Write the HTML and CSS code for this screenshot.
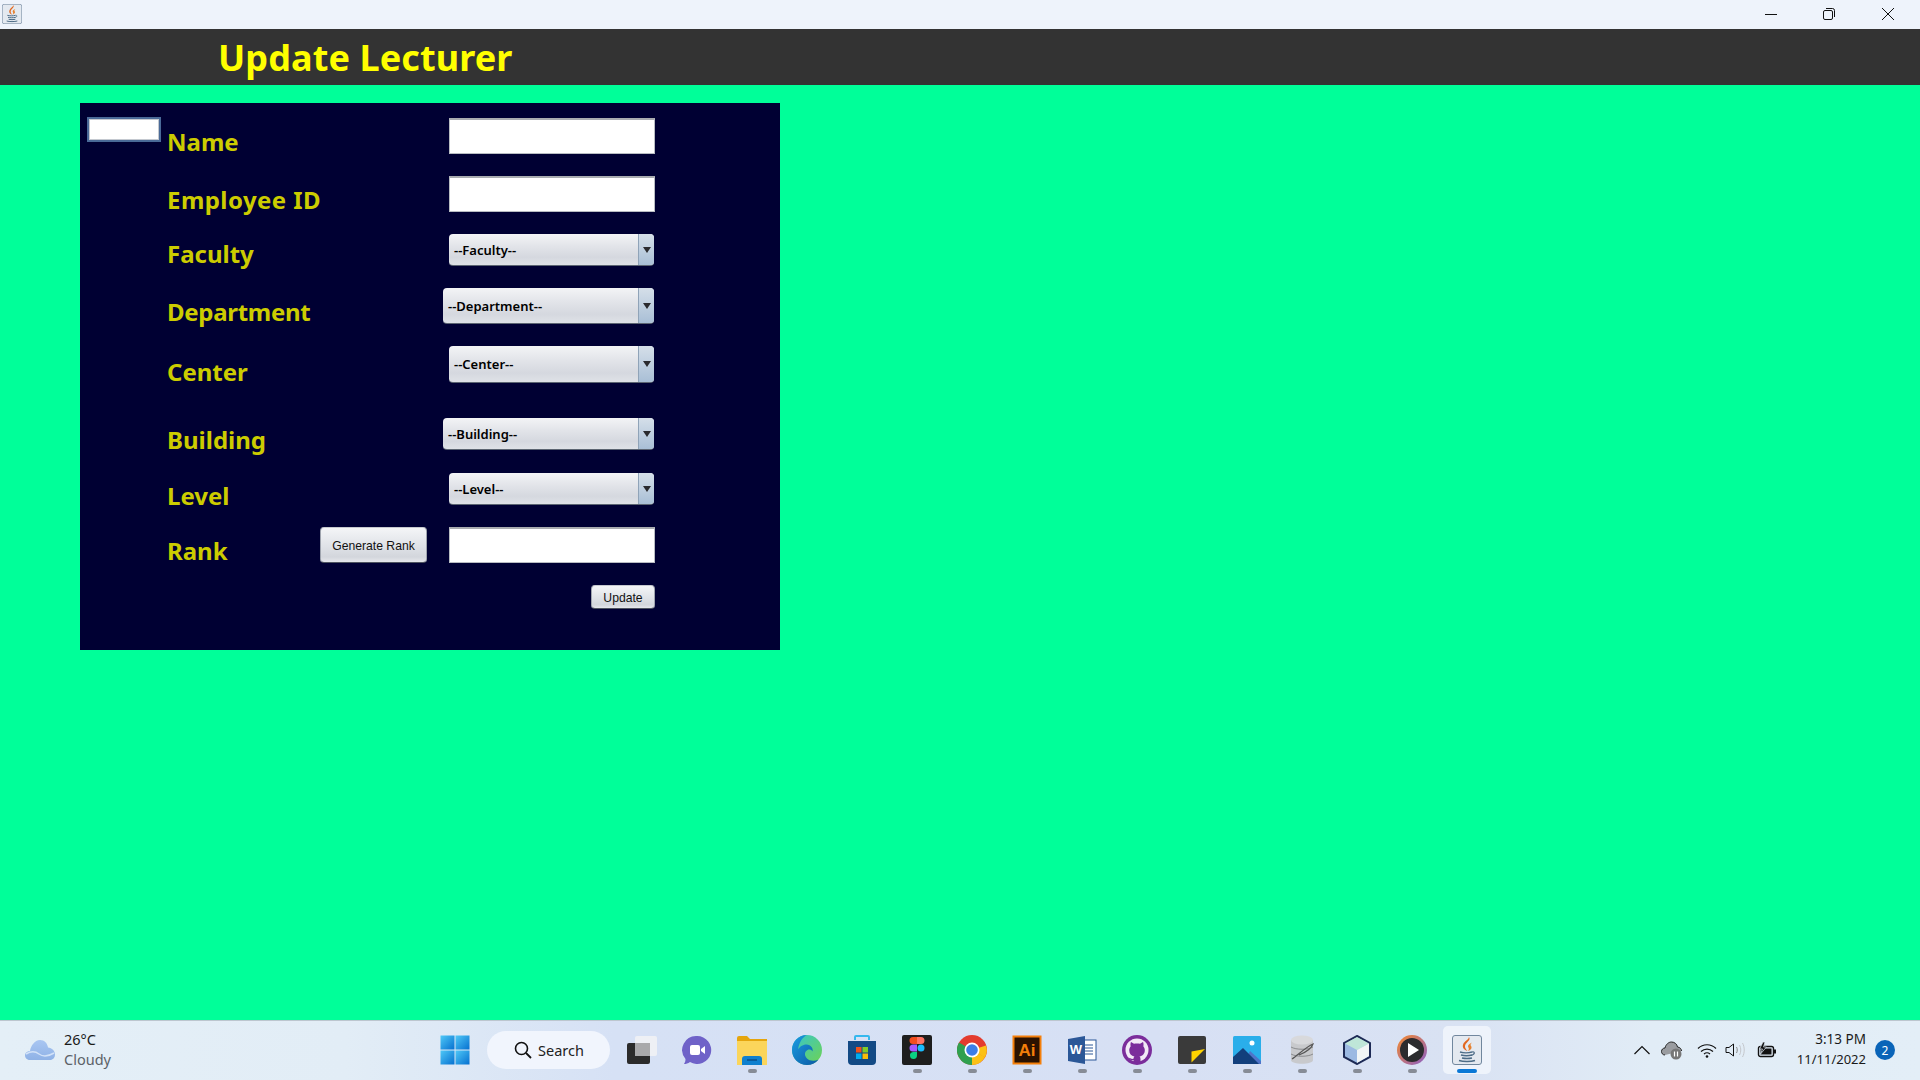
FILE: index.html
```html
<!DOCTYPE html>
<html lang="en">
<head>
<meta charset="utf-8">
<title>Update Lecturer</title>
<link rel="stylesheet" href="styles.css">
</head>
<body>
<svg class="defs" width="0" height="0" aria-hidden="true">
  <symbol id="java" viewBox="0 0 30 30">
    <rect x="0.5" y="0.5" width="29" height="29" rx="2.5" fill="#e4e9f0" stroke="#71879e"/>
    <path d="M17 2c2.500 3.500-4 5.500-4 9.500 0 1.800 1.200 3 2.500 4.500-4-1.500-5.500-3.800-4.300-6.800C12.400 6 16.500 5 17 2z" fill="#e2671f"/>
    <path d="M20 7.500c-3.500 1.500-4.800 3.200-3.600 5 .7 1.100.6 2.300-.4 3.500 3.500-1.200 4.200-3.400 3-5-.8-1.100-.4-2.200 1-3.500z" fill="#e6812f"/>
    <path d="M8 17c3 1 9 1 12 0M9 20c3 .8 8 .8 11 0M10 23c3 .6 7 .6 10 0" fill="none" stroke="#4d6c87" stroke-width="1.500"/>
    <path d="M20 17c3-.8 3.500 2.500-1 3.500" fill="none" stroke="#4d6c87" stroke-width="1.200"/>
    <path d="M7 25.500c4 1.200 12 1.200 16 0" fill="none" stroke="#4d6c87" stroke-width="1.500"/>
  </symbol>
</svg>

<header class="titlebar">
  <svg class="titlebar-icon"><use href="#java"/></svg>
  <div class="window-controls">
    <span class="win-btn"><svg width="14" height="14" viewBox="0 0 14 14"><path d="M1 7.500h12" stroke="#111" fill="none"/></svg></span>
    <span class="win-btn"><svg width="14" height="14" viewBox="0 0 14 14"><rect x="1.500" y="3.500" width="9" height="9" rx="1.500" fill="none" stroke="#111"/><path d="M4 1.500h6.500a2 2 0 0 1 2 2V10" fill="none" stroke="#111"/></svg></span>
    <span class="win-btn"><svg width="14" height="14" viewBox="0 0 14 14"><path d="M1 1l12 12M13 1L1 13" stroke="#111" fill="none"/></svg></span>
  </div>
</header>

<div class="app-header"><h1 class="app-title">Update Lecturer</h1></div>

<main class="canvas">
  <form class="panel">
    <div class="row row-first row-h36">
      <input class="mini-field" type="text">
      <label class="label label-6">Name</label>
      <input class="field" type="text">
    </div>
    <div class="row row-h36">
      <label class="label label-6 label-loose">Employee ID</label>
      <input class="field" type="text">
    </div>
    <div class="row row-h32">
      <label class="label label-4">Faculty</label>
      <div class="combo combo-h32"><span class="combo-text">--Faculty--</span><span class="combo-arrow"></span></div>
    </div>
    <div class="row row-h36">
      <label class="label label-6 label-tight">Department</label>
      <div class="combo combo-wide combo-h36"><span class="combo-text">--Department--</span><span class="combo-arrow"></span></div>
    </div>
    <div class="row row-h37">
      <label class="label label-8">Center</label>
      <div class="combo combo-h37"><span class="combo-text">--Center--</span><span class="combo-arrow"></span></div>
    </div>
    <div class="row row-h32 row-gap-large">
      <label class="label label-6">Building</label>
      <div class="combo combo-wide combo-h32"><span class="combo-text">--Building--</span><span class="combo-arrow"></span></div>
    </div>
    <div class="row row-h32 row-gap-23">
      <label class="label label-7">Level</label>
      <div class="combo combo-h32"><span class="combo-text">--Level--</span><span class="combo-arrow"></span></div>
    </div>
    <div class="row row-h36">
      <label class="label label-6">Rank</label>
      <button class="btn btn-generate" type="button">Generate Rank</button>
      <input class="field field-narrowcol" type="text">
    </div>
    <div class="row row-h24">
      <button class="btn btn-update" type="button">Update</button>
    </div>
  </form>
</main>

<footer class="taskbar">
  <div class="weather">
    <svg class="weather-icon" width="32" height="22" viewBox="0 0 32 22">
      <defs><linearGradient id="cl" x1="0" y1="0" x2="0" y2="1"><stop offset="0" stop-color="#a9c6f2"/><stop offset="1" stop-color="#8fb2e6"/></linearGradient></defs>
      <path d="M6 21C2.500 21 1 18.500 1 16.500 1 13.500 3.500 12 6 12c.8-5 4.500-11 10-11 4.500 0 7.500 3.500 8 7.500 4 .3 7 3.500 7 7 0 3-2 5.500-5 5.500z" fill="url(#cl)"/>
      <path d="M2 15c5-3 9-3 13 0s10 2 15-1" fill="none" stroke="#d2e2f8" stroke-width="1.500"/>
    </svg>
    <div class="weather-text">
      <span class="weather-temp">26°C</span>
      <span class="weather-desc">Cloudy</span>
    </div>
  </div>

  <div class="apps">
    <div class="app app-start">
      <svg width="30" height="30" viewBox="0 0 30 30">
        <defs><linearGradient id="win" x1="0" y1="0" x2="1" y2="1"><stop offset="0" stop-color="#4fc8f7"/><stop offset="1" stop-color="#0670d0"/></linearGradient></defs>
        <rect x="0.500" y="0.500" width="14" height="14" fill="url(#win)"/><rect x="15.500" y="0.500" width="14" height="14" fill="url(#win)"/>
        <rect x="0.500" y="15.500" width="14" height="14" fill="url(#win)"/><rect x="15.500" y="15.500" width="14" height="14" fill="url(#win)"/>
      </svg>
    </div>
    <div class="search">
      <svg width="18" height="18" viewBox="0 0 18 18"><circle cx="7.500" cy="7.500" r="6" fill="none" stroke="#111" stroke-width="1.600"/><path d="M12 12l5 5" stroke="#111" stroke-width="1.800" fill="none"/></svg>
      <span>Search</span>
    </div>
    <div class="app">
      <svg width="31" height="30" viewBox="1 0 31 30">
        <rect x="1" y="8" width="23" height="21" rx="2" fill="#2b2b2b"/>
        <rect x="9" y="1" width="22" height="20" rx="2" fill="#f2f2f4" fill-opacity=".85"/>
        <rect x="9" y="8" width="15" height="13" fill="#a9a9ab"/>
      </svg>
    </div>
    <div class="app">
      <svg width="30" height="30" viewBox="0 0 30 30">
        <path d="M15 1a14 14 0 1 1-7 26c-2 1.500-4 2-6 2 1-1.500 1.500-3 1.500-5A14 14 0 0 1 15 1z" fill="#6f62c8"/>
        <rect x="8" y="10" width="10" height="10" rx="2" fill="#fff"/><path d="M19 14l4-3v8l-4-3z" fill="#fff"/>
      </svg>
    </div>
    <div class="app app-open">
      <svg width="32" height="30" viewBox="0 0 32 30">
        <path d="M1 3a2 2 0 0 1 2-2h8l3 3h17v26H1z" fill="#e5a50d"/>
        <rect x="1" y="6" width="30" height="24" fill="#fbd55b"/>
        <path d="M6 30v-6a3 3 0 0 1 3-3h14a3 3 0 0 1 3 3v6z" fill="#0f80cf"/><path d="M11 25h10" stroke="#0a4f8a" stroke-width="1.500"/>
      </svg>
    </div>
    <div class="app">
      <svg width="30" height="30" viewBox="0 0 30 30">
        <defs>
          <linearGradient id="edge1" x1="0" y1="0" x2="1" y2="1"><stop offset="0" stop-color="#37c6d0"/><stop offset="1" stop-color="#6fd34f"/></linearGradient>
          <linearGradient id="edge2" x1="0" y1="0" x2="1" y2="1"><stop offset="0" stop-color="#1b9de2"/><stop offset="1" stop-color="#0c59a4"/></linearGradient>
        </defs>
        <circle cx="15" cy="15" r="15" fill="url(#edge1)"/>
        <path d="M15 0C6 0 0 7 0 15c0 8 6 15 15 15 5 0 9-2 11.500-5.500-4 2-9 1.500-11.500-1-3-3-2.500-7 .5-8.500 1.500-.8 4-.5 5 1.500 1-3-1.500-7-6-7-4 0-7 2.500-8.500 5C7.500 6 11 2 15 0z" fill="url(#edge2)"/>
      </svg>
    </div>
    <div class="app">
      <svg width="30" height="30" viewBox="0 0 30 30">
        <path d="M8 5V2a1 1 0 0 1 1-1h12a1 1 0 0 1 1 1v3" fill="none" stroke="#35b8ee" stroke-width="2"/>
        <path d="M1 6h28v20a4 4 0 0 1-4 4H5a4 4 0 0 1-4-4z" fill="#134a85"/>
        <rect x="9" y="12" width="5.500" height="5.500" fill="#f1511b"/><rect x="15.500" y="12" width="5.500" height="5.500" fill="#80cc28"/>
        <rect x="9" y="18.500" width="5.500" height="5.500" fill="#00adef"/><rect x="15.500" y="18.500" width="5.500" height="5.500" fill="#fbbc09"/>
      </svg>
    </div>
    <div class="app app-open">
      <svg width="30" height="30" viewBox="0 0 30 30">
        <rect width="30" height="30" rx="2" fill="#1e1e1e"/>
        <path d="M11 2h4v7h-4a3.500 3.500 0 0 1 0-7z" fill="#f24e1e"/><path d="M15 2h4a3.500 3.500 0 0 1 0 7h-4z" fill="#ff7262"/>
        <path d="M11 9.500h4v7h-4a3.500 3.500 0 0 1 0-7z" fill="#a259ff"/><circle cx="19" cy="13" r="3.500" fill="#1abcfe"/>
        <path d="M11 17h4v3.500a3.500 3.500 0 1 1-4-3.500z" fill="#0acf83"/>
      </svg>
    </div>
    <div class="app app-open">
      <svg width="30" height="30" viewBox="0 0 30 30">
        <circle cx="15" cy="15" r="15" fill="#e33b2e"/>
        <path d="M15 15L28 22a15 15 0 0 1-13 8z" fill="#fbc116"/>
        <path d="M15 15L15 30A15 15 0 0 1 2 7.500z" fill="#2fa04f"/>
        <path d="M15 15L29 10.500A15 15 0 0 1 28 22.500z" fill="#fbc116"/>
        <circle cx="15" cy="15" r="7.500" fill="#fff"/><circle cx="15" cy="15" r="5.800" fill="#3b7de8"/>
      </svg>
    </div>
    <div class="app app-open">
      <svg width="30" height="30" viewBox="0 0 30 30">
        <rect x="0.500" y="0.500" width="29" height="29" fill="#f47f0a"/>
        <rect x="2.500" y="2.500" width="25" height="25" fill="#2b1200"/>
        <text class="ai-text" x="15" y="21">Ai</text>
      </svg>
    </div>
    <div class="app app-open">
      <svg width="30" height="30" viewBox="0 0 30 30">
        <rect x="11" y="5" width="18" height="20" fill="#fff" stroke="#2b5797"/>
        <path d="M17 10h9M17 13h9M17 16h9M17 19h9" stroke="#2b5797"/>
        <path d="M1 4l17-3v28L1 26z" fill="#2b5797"/>
        <text class="word-text" x="9" y="19">W</text>
      </svg>
    </div>
    <div class="app app-open">
      <svg width="30" height="30" viewBox="0 0 30 30">
        <circle cx="15" cy="15" r="15" fill="#7b2d9b"/><circle cx="15" cy="15" r="11.500" fill="#f2eaf6"/>
        <path d="M9 7l3 1.800c2-.5 4-.5 6 0L21 7c.6 1.500.7 3 .3 4.300 1 1.200 1.500 2.500 1.500 4 0 3.500-2.200 5.700-5.300 6.200.7.600 1 1.500 1 2.500v3.500h-7v-2.500c-2.500.5-4-.3-5-2.500 1.200.5 3 1.800 5 1.300 0-1 .3-1.800.9-2.300-3.100-.5-5.200-2.700-5.200-6.200 0-1.500.5-2.800 1.500-4C8.300 10 8.400 8.500 9 7z" fill="#7b2d9b"/>
      </svg>
    </div>
    <div class="app app-open">
      <svg width="28" height="28" viewBox="0 0 28 28">
        <rect width="28" height="28" rx="2" fill="#3a3a3a"/>
        <path d="M13.500 15.500L27 13 13.500 26.500z" fill="#ffd400"/>
      </svg>
    </div>
    <div class="app app-open">
      <svg width="28" height="28" viewBox="0 0 28 28">
        <rect width="28" height="28" rx="1.500" fill="#2aaeea"/>
        <circle cx="19" cy="7" r="2.500" fill="#fff"/>
        <path d="M17 15l11 10v3H10z" fill="#4f74c9"/>
        <path d="M0 21L10 12l16 16H0z" fill="#123f7c"/>
      </svg>
    </div>
    <div class="app app-open">
      <svg width="24" height="30" viewBox="0 0 24 30">
        <path d="M1 5v20c0 5 22 5 22 0V5z" fill="#c8c9cc"/>
        <ellipse cx="12" cy="5" rx="11" ry="4.500" fill="#d8d9dc"/>
        <path d="M1 12c5 3 17 3 22 0M1 19c5 3 17 3 22 0" fill="none" stroke="#8a8b8e"/>
        <path d="M2 24C8 20 16 12 23 9c-2 6-9 9-14 11" fill="none" stroke="#555" stroke-width="1.200"/>
      </svg>
    </div>
    <div class="app app-open">
      <svg width="30" height="30" viewBox="0 0 30 30">
        <path d="M15 1l13 7v14l-13 7L2 22V8z" fill="#9cb9e2" stroke="#1d2a55" stroke-width="2"/>
        <path d="M15 2l12 6.500-12 6.500L3 8.500z" fill="#bfe6d8"/>
        <path d="M15 15l12-6.500V21l-12 7z" fill="#f2f5f6"/>
      </svg>
    </div>
    <div class="app app-open">
      <svg width="30" height="30" viewBox="0 0 30 30">
        <defs><linearGradient id="pl" x1="0" y1="0" x2="1" y2="1"><stop offset="0" stop-color="#f58a2c"/><stop offset="1" stop-color="#8a5ec8"/></linearGradient></defs>
        <circle cx="15" cy="15" r="15" fill="url(#pl)"/><circle cx="15" cy="15" r="12" fill="#2c2c2e"/>
        <path d="M11 8l11 7-11 7z" fill="#fff"/>
      </svg>
    </div>
    <div class="app app-active">
      <svg width="30" height="30"><use href="#java"/></svg>
    </div>
  </div>

  <div class="tray">
    <svg class="tray-chevron" width="18" height="10" viewBox="0 0 18 10"><path d="M1.500 9L9 1.500 16.500 9" fill="none" stroke="#111" stroke-width="1.200"/></svg>
    <svg class="tray-cloud" width="22" height="20" viewBox="0 0 22 20">
      <path d="M4 15C1.500 15 .5 13 .5 11.500.5 9.500 2 8 4 8c.8-3.500 3.500-6 6.500-6S16 4 16.500 7c2.500.3 4 2 4 4" fill="#9a9ca0" stroke="#222"/>
      <circle cx="15" cy="14" r="5.500" fill="#777"/><path d="M13.500 11.500v5M16.500 11.500v5" stroke="#fff" stroke-width="1.200"/>
    </svg>
    <svg class="tray-wifi" width="20" height="15" viewBox="0 0 20 15">
      <path d="M1 5.500c5-5 13-5 18 0M4 8.500c3.500-3.200 8.500-3.200 12 0M7 11c1.800-1.500 4.200-1.500 6 0" fill="none" stroke="#111" stroke-width="1.200"/><circle cx="10" cy="13.500" r="1.300" fill="#111"/>
    </svg>
    <svg class="tray-volume" width="20" height="16" viewBox="0 0 20 16">
      <path d="M1 5.500h3L8.500 2v12L4 10.500H1z" fill="none" stroke="#111"/><path d="M11.500 5c1 2 1 4 0 6" fill="none" stroke="#888"/><path d="M14.500 3c1.700 3 1.700 7 0 10M17.500 1c2.300 4 2.300 10 0 14" fill="none" stroke="#c4c7cc"/>
    </svg>
    <svg class="tray-battery" width="20" height="16" viewBox="0 0 20 16">
      <rect x="1.500" y="4.500" width="15" height="10" rx="2" fill="none" stroke="#111" stroke-width="1.400"/>
      <rect x="3.500" y="6.500" width="11" height="6" fill="#111"/><rect x="17" y="7.500" width="2" height="4" fill="#111"/>
      <path d="M6 0L2.500 7h3L3.500 12l6-7H6.500L8 0z" fill="#111" stroke="#e3edf6" stroke-width=".7"/>
    </svg>
    <div class="clock"><span class="clock-time">3:13 PM</span><span class="clock-date">11/11/2022</span></div>
    <span class="badge">2</span>
  </div>
</footer>
</body>
</html>
```

FILE: styles.css
```css
* { box-sizing: border-box; }

html, body { margin: 0; height: 100%; }

body {
  width: 1920px;
  height: 1080px;
  display: flex;
  flex-direction: column;
  overflow: hidden;
  font-family: "Noto Sans", "Open Sans", sans-serif;
}

.defs { display: block; height: 0; }

/* window chrome */
.titlebar {
  flex: 0 0 29px;
  display: flex;
  align-items: center;
  justify-content: space-between;
  padding: 0 3px 2px 2px;
  background: #eef3fb;
}
.titlebar-icon { width: 20px; height: 20px; }
.window-controls { display: flex; }
.win-btn {
  width: 58.500px;
  display: flex;
  justify-content: center;
}

.app-header {
  flex: 0 0 56px;
  display: flex;
  align-items: center;
  padding: 1px 0 0 218px;
  background: #333333;
}
.app-title {
  margin: 0;
  color: #ffff00;
  font-family: "Noto Sans", sans-serif;
  font-size: 36px;
  font-weight: 700;
  letter-spacing: 0.1px;
  line-height: 44px;
  white-space: nowrap;
}

.canvas {
  flex: 1;
  background: #00ff99;
  padding: 18px 0 0 80px;
}

/* form panel */
.panel {
  width: 700px;
  height: 547px;
  padding-top: 15px;
  background: #000033;
}
.row {
  display: grid;
  grid-template-columns: 87px 153px 129px 206px;
  margin-top: 22px;
  align-items: start;
}
.row-h24 { grid-template-rows: 24px; }
.row-h32 { grid-template-rows: 32px; }
.row-h36 { grid-template-rows: 36px; }
.row-h37 { grid-template-rows: 37px; }
.row-first { margin-top: 0; }
.row-gap-large { margin-top: 35px; }
.row-gap-23 { margin-top: 23px; }

.label {
  grid-column: 2;
  align-self: center;
  color: #cccc00;
  font-size: 24px;
  font-weight: 700;
  line-height: 30px;
  white-space: nowrap;
}
.label-4 { margin-top: 8px; }
.label-6 { margin-top: 12px; }
.label-7 { margin-top: 14px; }
.label-8 { margin-top: 14px; }
.label-loose { letter-spacing: 0.45px; }
.label-tight { letter-spacing: -0.3px; }

.field {
  grid-column: 3 / 5;
  justify-self: end;
  width: 206px;
  height: 36px;
  margin: 0;
  padding: 0;
  background: #ffffff;
  border: 1px solid #b8bcc2;
  border-top: 2px solid #a9acb0;
  border-radius: 0;
}
.field-narrowcol { grid-column: 4; }

.mini-field {
  grid-column: 1;
  grid-row: 1;
  justify-self: end;
  width: 74px;
  height: 25px;
  margin: -1px 6px 0 0;
  padding: 0;
  background: #ffffff;
  border: 2px solid #4a6a98;
  box-shadow: inset 0 0 0 1px #c4c9d0;
}

.combo {
  grid-column: 3 / 5;
  justify-self: end;
  width: 205px;
  margin-right: 1px;
  display: flex;
  align-items: center;
  overflow: hidden;
  background: linear-gradient(#f3f4f6 0%, #e2e4e9 40%, #d5d8df 75%, #dfe2e7 100%);
  border-bottom: 1px solid #5c6572;
  border-radius: 4px;
}
.combo-wide { width: 211px; }
.combo-h32 { height: 32px; }
.combo-h36 { height: 36px; }
.combo-h37 { height: 37px; }
.combo-text {
  flex: 1;
  padding-left: 5px;
  color: #000000;
  font-family: "Noto Sans", sans-serif;
  font-size: 13px;
  font-weight: 600;
  white-space: nowrap;
}
.combo-arrow {
  flex: 0 0 16px;
  align-self: stretch;
  position: relative;
  border-left: 1px solid #8fa3b8;
  background: linear-gradient(#d5dfe9, #a9bfd6);
}
.combo-arrow::after {
  content: "";
  position: absolute;
  left: 4px;
  top: calc(50% - 3px);
  border-left: 4px solid transparent;
  border-right: 4px solid transparent;
  border-top: 6px solid #2a2a2e;
}

.btn {
  margin: 0;
  padding: 1px 0 0;
  color: #111111;
  font-family: "Liberation Sans", Arial, sans-serif;
  font-size: 12.200px;
  background: linear-gradient(#f4f5f7, #dfe2e7 55%, #d3d6dc 85%, #e6e8ec);
  border: 1px solid #3f4652;
  border-color: #c6c9cf #9ea3ad #4e5460 #9ea3ad;
  border-radius: 4px;
}
.btn-generate {
  grid-column: 3;
  grid-row: 1;
  width: 107px;
  height: 36px;
}
.btn-update {
  grid-column: 4;
  justify-self: end;
  width: 64px;
  height: 24px;
}

/* taskbar */
.taskbar {
  flex: 0 0 60px;
  display: flex;
  align-items: stretch;
  padding-bottom: 1px;
  border-top: 1px solid #bcc6cf;
  background: linear-gradient(90deg, #e4eff7 0%, #e2edf6 18%, #d6e1f5 32%, #d7e0f4 60%, #d9e2f3 76%, #e1ecf6 86%, #e3eef7 100%);
}
.weather {
  flex: 0 0 427px;
  display: flex;
  align-items: center;
  padding-left: 24px;
  gap: 8px;
}
.weather-icon { margin-top: -1px; }
.weather-text {
  display: flex;
  flex-direction: column;
  margin-top: -2px;
  font-size: 14.500px;
  line-height: 20px;
}
.weather-temp { color: #1a1a1a; }
.weather-desc { color: #5c6268; }

.apps {
  display: flex;
  align-items: center;
  height: 100%;
}
.app {
  position: relative;
  flex: 0 0 55px;
  height: 48px;
  display: flex;
  align-items: center;
  justify-content: center;
}
.app-start { margin-right: 5px; }
.app-open::after,
.app-active::after {
  content: "";
  position: absolute;
  left: 50%;
  bottom: 1px;
  width: 9px;
  height: 4px;
  margin-left: -4.500px;
  border-radius: 2px;
  background: #878c96;
}
.app-active {
  flex: 0 0 48px;
  margin-left: 3.500px;
  border-radius: 5px;
  background: #eef3fb;
}
.app-active::after {
  width: 20px;
  margin-left: -10px;
  background: #0b78d6;
}
.search {
  flex: 0 0 123px;
  height: 38px;
  margin-right: 4.500px;
  display: flex;
  align-items: center;
  padding-left: 27px;
  gap: 6px;
  border-radius: 19px;
  background: #f1f5fd;
  color: #222222;
  font-size: 14.500px;
}
.ai-text {
  fill: #f47f0a;
  font-family: "Liberation Sans", sans-serif;
  font-size: 17px;
  font-weight: 700;
  text-anchor: middle;
}
.word-text {
  fill: #ffffff;
  font-family: "Liberation Sans", sans-serif;
  font-size: 13px;
  font-weight: 700;
  text-anchor: middle;
}

.tray {
  flex: 1;
  display: flex;
  align-items: center;
  padding-left: 142px;
}
.tray-chevron { margin-right: 10px; }
.tray-cloud { margin-right: 14px; }
.tray-wifi { margin-right: 8px; }
.tray-volume { margin-right: 12px; }
.clock {
  flex: 0 0 89px;
  display: flex;
  flex-direction: column;
  align-items: flex-end;
  margin-top: -2px;
  color: #1a1a1a;
  line-height: 20px;
}
.clock-time { font-size: 13.500px; }
.clock-date { font-size: 13px; }
.badge {
  width: 20px;
  height: 20px;
  margin-left: 9px;
  display: flex;
  align-items: center;
  justify-content: center;
  border-radius: 50%;
  background: #0a64b8;
  color: #ffffff;
  font-size: 12px;
}
```
